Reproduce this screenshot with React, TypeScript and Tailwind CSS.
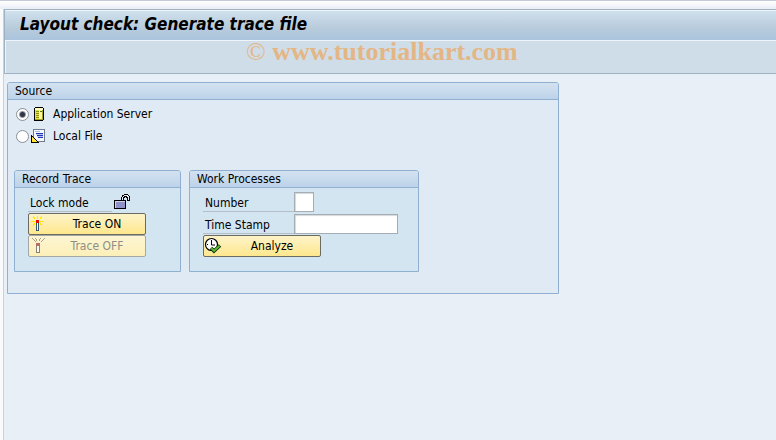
import React, { useState } from 'react';
import clsx from 'clsx';

interface GroupBoxProps {
  title: string;
  className?: string;
  bodyClassName?: string;
  children: React.ReactNode;
}

const GroupBox: React.FC<GroupBoxProps> = ({ title, className, bodyClassName, children }) => (
  <section className={clsx('rounded-t-[3px] border border-[#8fb0d0]', className)}>
    <h2 className="h-[17px] rounded-t-[2px] border-b border-[#8fb0d0] bg-linear-to-b from-[#d3e2f0] to-[#bdd3ea] pl-[7px] leading-4">
      {title}
    </h2>
    <div className={bodyClassName}>{children}</div>
  </section>
);

interface ActionButtonProps {
  label: string;
  icon: React.ReactNode;
  disabled?: boolean;
}

const ActionButton: React.FC<ActionButtonProps> = ({ label, icon, disabled }) => (
  <button
    type="button"
    disabled={disabled}
    className={clsx(
      'flex h-[22px] w-[118px] items-center rounded-[2px] border bg-linear-to-b',
      disabled
        ? 'border-[#a3a8a6] from-[#fdf5d3] to-[#fcf0b8] text-[#8e8e86]'
        : 'border-[#6b6b62] from-[#fdf3c8] to-[#fee78c] text-black'
    )}
  >
    <span className="w-5 shrink-0">{icon}</span>
    <span className="flex-1 text-center">{label}</span>
  </button>
);

const ServerIcon = () => (
  <svg width="16" height="16" viewBox="0 0 16 16" shapeRendering="crispEdges">
    <path d="M4 1h8v1h1v12h-1v1H3V2h1z" fill="#000" />
    <path d="M4 2h8v2H4z" fill="#fdfdc4" />
    <path d="M4 4h4v10H4z" fill="#e3e34e" />
    <path d="M8 4h4v10H8z" fill="#f6f6a4" />
    <path d="M5 5h3v1H5zM5 7h3v1H5zM5 9h3v1H5zM5 11h3v1H5z" fill="#8e8e10" />
    <path d="M11 4h1v10h-1zM4 13h8v1H4z" fill="#a3a31c" />
    <path d="M9 5h2v1H9z" fill="#2f7d2f" />
  </svg>
);

const LocalFileIcon = () => (
  <svg width="16" height="16" viewBox="0 0 16 16" shapeRendering="crispEdges">
    <path d="M2 1h12v13H2z" fill="#6f7c88" />
    <path d="M3 2h10v11H3z" fill="#f4f7fd" />
    <path d="M4 3h5v1H4z" fill="#a9bdd6" />
    <path d="M5 5h7v1H5zM6 7h6v1H6zM7 9h5v1H7z" fill="#1f35bd" />
    <path d="M5 6h7v1H5zM6 8h6v1H6z" fill="#b9c6ee" />
    <path d="M0 7h1v1h1v1h1v1h1v1h1v1h1v1h1v1h1v1H0z" fill="#000" />
    <path d="M1 9h1v1h1v1h1v1h1v1h1v1H1z" fill="#ffe23a" />
  </svg>
);

const UnlockedIcon = () => (
  <svg width="16" height="15" viewBox="0 0 16 15" shapeRendering="crispEdges">
    <path d="M7 7V3h1V1h2V0h4v1h1v1h1v5h-3V4h-1V3h-1v1h-1v3z" fill="#000" />
    <path d="M8 6V3h1V2h1V1h4v1h1v4h-1V3h-1V2h-3v1H9v3z" fill="#e8eef4" />
    <path d="M0 6h12v9H0z" fill="#000" />
    <path d="M1 7h10v7H1z" fill="#8e92c6" />
    <path d="M1 7h10v1H2v6H1z" fill="#d0d2ee" />
  </svg>
);

const TraceOnIcon = () => (
  <svg width="16" height="18" viewBox="0 0 16 18" shapeRendering="crispEdges">
    <path
      d="M8 1h1v3H8zM4 1h1v1h1v2H5V3H4zM12 1h1v2h-1v1h-1V2h1zM2 6h4v1H2zM11 6h4v1h-4zM4 10V9h1V8h1v2H5v1H4zM13 11h-1v-1h-1V8h1v1h1z"
      fill="#ffea00"
    />
    <path d="M7 5h3v3H7z" fill="#f00808" />
    <path d="M7 8h3v8H7z" fill="#35566e" />
    <path d="M8 8h1v7H8z" fill="#fff" />
  </svg>
);

const TraceOffIcon = () => (
  <svg width="16" height="18" viewBox="0 0 16 18" shapeRendering="crispEdges">
    <path
      d="M3 1h1v1H3zM4 2h1v1H4zM5 3h1v1H5zM6 4h1v1H6zM6 1h1v1H6zM7 2h1v2H7zM11 1h1v1h-1zM10 2h1v2h-1zM15 1h1v1h-1zM14 2h1v1h-1zM13 3h1v1h-1zM12 4h1v1h-1z"
      fill="#aaa68e"
    />
    <path d="M7 6h4v3H7z" fill="#b96f67" />
    <path d="M7 9h4v7H7z" fill="#85837a" />
    <path d="M8 9h2v6H8z" fill="#fffaf0" />
  </svg>
);

const AnalyzeIcon = () => (
  <svg width="18" height="18" viewBox="0 0 18 18">
    <circle cx="7.5" cy="7.5" r="6" fill="#fff" stroke="#000" strokeWidth="1.2" />
    <path d="M7.5 3v5H11" fill="none" stroke="#000" />
    <path d="M3 7.5h1M7.5 11v1" stroke="#000" />
    <path d="M7 11l3 3 6-5.5" fill="none" stroke="#0c2c0c" strokeWidth="3.6" />
    <path d="M7.3 11.2l2.8 2.6 5.5-5" fill="none" stroke="#5cb82c" strokeWidth="2" />
  </svg>
);

const SOURCES = [
  { id: 'server', label: 'Application Server', icon: <ServerIcon /> },
  { id: 'local', label: 'Local File', icon: <LocalFileIcon /> },
];

const LABEL_CLASS = 'h-5 border-b border-[#b3bec8] pt-px pl-0.5 leading-5';

const INPUT_CLASS =
  'h-5 border border-[#a5acb3] bg-white px-1 shadow-[inset_1px_1px_1px_#d5d9dc] outline-none';

export default function App() {
  const [source, setSource] = useState('server');

  return (
    <div className="min-h-screen bg-[#e8eff6] font-['DejaVu_Sans_Condensed','DejaVu_Sans',sans-serif] text-[12px] text-black">
      <div className="h-[9px] border-t border-[#c5cbdb] bg-linear-to-b from-white to-[#e9eef5]" />

      <div className="flex min-h-[calc(100vh-9px)]">
        <div className="w-1 shrink-0 border-r border-[#c6d2df] bg-[#f8fafc]" />

        <div className="min-w-0 flex-1">
          {/* Title bar */}
          <header className="border-y border-l border-[#9fb2c4]">
            <h1 className="h-[31px] truncate border-y border-[#eef4f9] bg-linear-to-b from-[#d0e0ed] via-[#b7cbdb] via-60% to-[#abc4dd] pl-[15px] text-[17px] leading-[26px] font-bold italic">
              Layout check: Generate trace file
            </h1>
            <div className="relative h-8 border-l border-[#eef4f9] bg-[#cfdde8]">
              <p className="absolute top-0 left-60 font-['Liberation_Serif',serif] text-[26px] leading-[22px] whitespace-nowrap text-[#e4b685]">
                © <b>www.tutorialkart.com</b>
              </p>
            </div>
          </header>

          <main className="px-[3px] pt-2">
            <GroupBox
              title="Source"
              className="max-w-[552px] bg-[#dfeaf4]"
              bodyClassName="px-1.5 pt-[3px] pb-[21px]"
            >
              <div className="pl-0.5">
                {SOURCES.map((item) => (
                  <label key={item.id} className="flex h-[22px] w-fit items-center">
                    <input
                      type="radio"
                      name="source"
                      checked={source === item.id}
                      onChange={() => setSource(item.id)}
                      className="size-[13px] appearance-none rounded-full border border-[#8b8f94] bg-white checked:bg-[radial-gradient(circle,#2f3446_0_2px,white_4px)]"
                    />
                    <span className="ml-0.5">{item.icon}</span>
                    <span className="ml-1.5">{item.label}</span>
                  </label>
                ))}
              </div>

              <div className="mt-[23px] flex gap-2">
                <GroupBox
                  title="Record Trace"
                  className="w-[167px] bg-[#d4e5f2]"
                  bodyClassName="px-[13px] pt-1 pb-3.5"
                >
                  <div className="flex h-[21px] items-start">
                    <span className={clsx(LABEL_CLASS, 'w-[84px]')}>Lock mode</span>
                    <span className="pt-0.5 pl-0.5">
                      <UnlockedIcon />
                    </span>
                  </div>
                  <ActionButton label="Trace ON" icon={<TraceOnIcon />} />
                  <ActionButton label="Trace OFF" icon={<TraceOffIcon />} disabled />
                </GroupBox>

                <GroupBox
                  title="Work Processes"
                  className="w-[230px] bg-[#d4e5f2]"
                  bodyClassName="px-[13px] pt-1 pb-3.5"
                >
                  <div className="flex h-[22px] items-start">
                    <label htmlFor="number" className={clsx(LABEL_CLASS, 'w-[91px]')}>
                      Number
                    </label>
                    <input id="number" type="text" className={clsx(INPUT_CLASS, 'w-5')} />
                  </div>
                  <div className="flex h-[21px] items-start">
                    <label htmlFor="timestamp" className={clsx(LABEL_CLASS, 'w-[91px]')}>
                      Time Stamp
                    </label>
                    <input id="timestamp" type="text" className={clsx(INPUT_CLASS, 'w-[104px]')} />
                  </div>
                  <ActionButton label="Analyze" icon={<AnalyzeIcon />} />
                </GroupBox>
              </div>
            </GroupBox>
          </main>
        </div>
      </div>
    </div>
  );
}
